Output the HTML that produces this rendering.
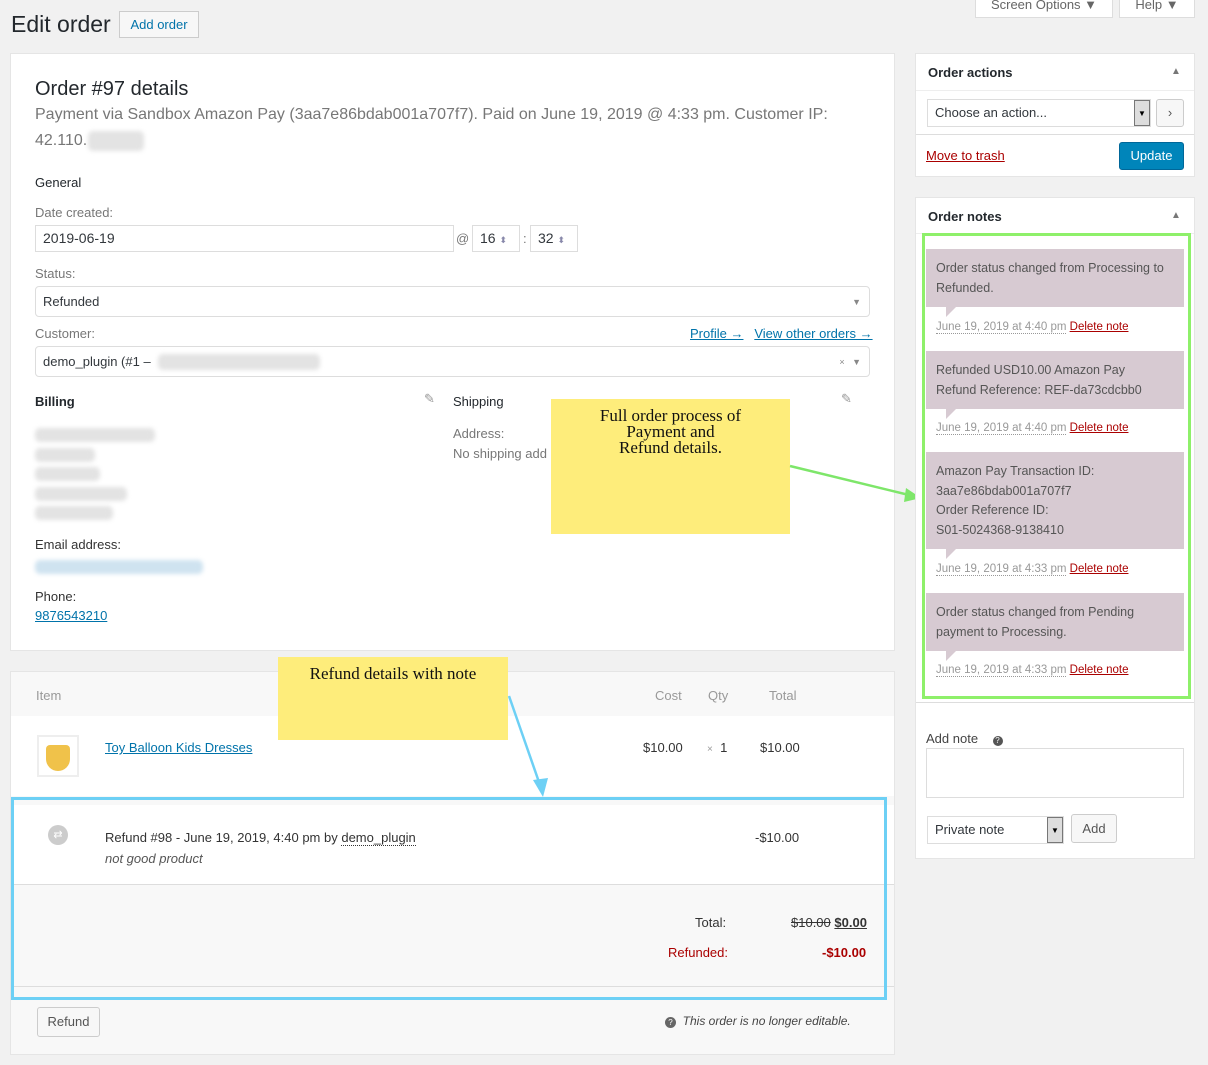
<!DOCTYPE html>
<html><head><meta charset="utf-8"><style>
*{box-sizing:border-box;margin:0;padding:0}
body{width:1208px;height:1065px;background:#f1f1f1;font-family:"Liberation Sans",sans-serif;font-size:13px;color:#444;position:relative;overflow:hidden}
.a{position:absolute}
.box{position:absolute;background:#fff;border:1px solid #e5e5e5}
.inp{position:absolute;background:#fff;border:1px solid #ddd;font-size:13px;color:#32373c;padding-left:7px;line-height:24px}
.lnk{color:#0073aa;text-decoration:underline}
.red{color:#a00;text-decoration:underline}
.note{position:absolute;left:926px;width:258px;background:#d7cad2;color:#555;font-size:12.5px;line-height:19.5px;padding:10px 20px 10px 10px}
.note:after{content:"";position:absolute;left:20px;bottom:-10px;border-top:10px solid #d7cad2;border-right:10px solid transparent}
.meta{position:absolute;left:936px;font-size:11.5px;color:#999}
.meta span{border-bottom:1px dotted #999}
.meta b{font-weight:normal;color:#a00;text-decoration:underline}
.blur{position:absolute;background:#e3e3e3;border-radius:5px;filter:blur(2px)}
.yel{position:absolute;background:#feed7b;font-family:"Liberation Serif",serif;font-size:17px;color:#111;text-align:center;line-height:16px}
</style></head><body>
<div class="a" style="left:11px;top:11px;font-size:23px;color:#23282d">Edit order</div>
<div class="a" style="left:119px;top:11px;width:80px;height:27px;border:1px solid #ccc;background:#f7f7f7;color:#0073aa;font-size:13px;text-align:center;line-height:25px">Add order</div>
<div class="a" style="left:975px;top:-6px;width:138px;height:24px;background:#fff;border:1px solid #ddd;color:#666;text-align:center;line-height:20px">Screen Options ▼</div>
<div class="a" style="left:1119px;top:-6px;width:76px;height:24px;background:#fff;border:1px solid #ddd;color:#666;text-align:center;line-height:20px">Help ▼</div>

<div class="box" style="left:10px;top:53px;width:885px;height:598px"></div>
<div class="a" style="left:35px;top:78px;font-size:20px;color:#23282d">Order #97 details</div>
<div class="a" style="left:35px;top:102px;font-size:16px;color:#777;line-height:26px;width:810px">Payment via Sandbox Amazon Pay (3aa7e86bdab001a707f7). Paid on June 19, 2019 @ 4:33 pm. Customer IP: 42.110.</div>
<div class="blur" style="left:88px;top:131px;width:56px;height:20px"></div>
<div class="a" style="left:35px;top:175px;color:#23282d">General</div>
<div class="a" style="left:35px;top:205px;color:#777">Date created:</div>
<div class="inp" style="left:35px;top:225px;width:419px;height:27px;font-size:14px">2019-06-19</div>
<div class="a" style="left:456px;top:231px;color:#777">@</div>
<div class="inp" style="left:472px;top:225px;width:48px;height:27px;font-size:14px">16 <span style="font-size:9px;color:#88a">⬍</span></div>
<div class="a" style="left:523px;top:231px;color:#777">:</div>
<div class="inp" style="left:530px;top:225px;width:48px;height:27px;font-size:14px">32 <span style="font-size:9px;color:#88a">⬍</span></div>
<div class="a" style="left:35px;top:266px;color:#777">Status:</div>
<div class="inp" style="left:35px;top:286px;width:835px;height:31px;border-radius:4px;line-height:30px">Refunded<span style="position:absolute;right:8px;font-size:9px;color:#888">▼</span></div>
<div class="a" style="left:35px;top:326px;color:#777">Customer:</div>
<div class="a" style="left:690px;top:326px"><span class="lnk">Profile →</span>&nbsp;&nbsp;&nbsp;<span class="lnk">View other orders →</span></div>
<div class="inp" style="left:35px;top:346px;width:835px;height:31px;border-radius:4px;line-height:30px">demo_plugin (#1 – <span style="position:absolute;right:8px;font-size:9px;color:#888">×&nbsp;&nbsp;&nbsp;▼</span></div>
<div class="blur" style="left:158px;top:354px;width:162px;height:16px"></div>
<div class="a" style="left:35px;top:394px;color:#23282d;font-weight:bold">Billing</div>
<div class="a" style="left:424px;top:391px;color:#999">✎</div>
<div class="a" style="left:453px;top:394px;color:#23282d">Shipping</div>
<div class="a" style="left:841px;top:391px;color:#999">✎</div>
<div class="a" style="left:453px;top:426px;color:#777">Address:</div>
<div class="a" style="left:453px;top:446px;color:#777">No shipping add</div>
<div class="blur" style="left:35px;top:428px;width:120px;height:14px"></div>
<div class="blur" style="left:35px;top:448px;width:60px;height:14px"></div>
<div class="blur" style="left:35px;top:467px;width:65px;height:14px"></div>
<div class="blur" style="left:35px;top:487px;width:92px;height:14px"></div>
<div class="blur" style="left:35px;top:506px;width:78px;height:14px"></div>
<div class="a" style="left:35px;top:537px;color:#333">Email address:</div>
<div class="blur" style="left:35px;top:560px;width:168px;height:14px;background:#cfe3f0"></div>
<div class="a" style="left:35px;top:589px;color:#333">Phone:</div>
<div class="a lnk" style="left:35px;top:608px">9876543210</div>

<div class="yel" style="left:551px;top:399px;width:239px;height:135px;padding-top:9px">Full order process of<br>Payment and<br>Refund details.</div>
<svg class="a" style="left:785px;top:460px" width="140" height="50"><line x1="5" y1="6" x2="124" y2="35" stroke="#7ee66a" stroke-width="2.5"/><polygon points="136,38 121,28 119,42" fill="#7ee66a"/></svg>

<div class="box" style="left:10px;top:671px;width:885px;height:384px;background:#f8f8f8"></div>
<div class="a" style="left:11px;top:716px;width:883px;height:80px;background:#fff"></div>
<div class="a" style="left:36px;top:688px;color:#999">Item</div>
<div class="a" style="left:655px;top:688px;color:#999">Cost</div>
<div class="a" style="left:708px;top:688px;color:#999">Qty</div>
<div class="a" style="left:769px;top:688px;color:#999">Total</div>
<div class="a" style="left:37px;top:735px;width:42px;height:42px;border:2px solid #eee;background:#fff"><div style="margin:8px auto 0;width:24px;height:26px;background:#f0c24a;border-radius:4px 4px 12px 12px"></div></div>
<div class="a lnk" style="left:105px;top:740px">Toy Balloon Kids Dresses</div>
<div class="a" style="left:643px;top:740px;color:#333">$10.00</div>
<div class="a" style="left:707px;top:740px;color:#333"><span style="color:#999;font-size:10px">×</span>&nbsp; 1</div>
<div class="a" style="left:760px;top:740px;color:#333">$10.00</div>
<div class="a" style="left:11px;top:805px;width:883px;height:80px;background:#fff;border-bottom:1px solid #ddd"></div>
<div class="a" style="left:48px;top:825px;width:20px;height:20px;border-radius:50%;background:#ccc;color:#fff;font-size:11px;text-align:center;line-height:20px">⇄</div>
<div class="a" style="left:105px;top:830px;color:#333">Refund #98 - June 19, 2019, 4:40 pm by <span style="border-bottom:1px dotted #333">demo_plugin</span></div>
<div class="a" style="left:105px;top:851px;color:#555;font-style:italic">not good product</div>
<div class="a" style="left:755px;top:830px;color:#333">-$10.00</div>
<div class="a" style="left:695px;top:915px;color:#333">Total:</div>
<div class="a" style="left:791px;top:915px;color:#333"><s>$10.00</s> <b style="text-decoration:underline">$0.00</b></div>
<div class="a" style="left:668px;top:945px;color:#a00">Refunded:</div>
<div class="a" style="left:822px;top:945px;color:#a00;font-weight:bold">-$10.00</div>
<div class="a" style="left:11px;top:986px;width:883px;border-top:1px solid #ddd"></div>
<div class="a" style="left:11px;top:797px;width:876px;height:203px;border:3px solid #6dd0f5"></div>
<div class="a" style="left:37px;top:1007px;width:63px;height:30px;border:1px solid #ccc;background:#f7f7f7;border-radius:3px;text-align:center;line-height:28px;color:#555">Refund</div>
<div class="a" style="left:665px;top:1014px;color:#444;font-style:italic;font-size:12px"><span style="display:inline-block;width:11px;height:11px;border-radius:50%;background:#666;color:#fff;font-size:8px;text-align:center;line-height:11px;font-style:normal">?</span>&nbsp; This order is no longer editable.</div>

<div class="yel" style="left:278px;top:657px;width:230px;height:83px;padding-top:9px">Refund details with note</div>
<svg class="a" style="left:500px;top:690px" width="60" height="112"><line x1="9" y1="6" x2="40" y2="95" stroke="#6dd0f5" stroke-width="2.5"/><polygon points="43,107 33,90 48,88" fill="#6dd0f5"/></svg>

<div class="box" style="left:915px;top:53px;width:280px;height:124px"></div>
<div class="a" style="left:928px;top:65px;color:#23282d;font-weight:bold">Order actions</div>
<div class="a" style="left:1171px;top:66px;color:#777;font-size:10px">▲</div>
<div class="a" style="left:916px;top:90px;width:278px;border-top:1px solid #eee"></div>
<div class="inp" style="left:927px;top:99px;width:224px;height:28px;line-height:26px">Choose an action...<span style="position:absolute;right:0;top:0;width:16px;height:26px;border:1px solid #777;background:#ddd;font-size:8px;text-align:center;color:#000">▼</span></div>
<div class="a" style="left:1156px;top:99px;width:28px;height:28px;border:1px solid #ccc;border-radius:3px;background:#f7f7f7;text-align:center;line-height:26px;color:#555">›</div>
<div class="a" style="left:916px;top:134px;width:278px;border-top:1px solid #ddd"></div>
<div class="a red" style="left:926px;top:148px">Move to trash</div>
<div class="a" style="left:1119px;top:142px;width:65px;height:28px;background:#0085ba;border:1px solid #006799;border-radius:3px;color:#fff;text-align:center;line-height:26px;font-size:13px">Update</div>

<div class="box" style="left:915px;top:197px;width:280px;height:662px"></div>
<div class="a" style="left:928px;top:209px;color:#23282d;font-weight:bold">Order notes</div>
<div class="a" style="left:1171px;top:210px;color:#777;font-size:10px">▲</div>
<div class="a" style="left:916px;top:233px;width:278px;border-top:1px solid #eee"></div>
<div class="note" style="top:249px;height:58px">Order status changed from Processing to Refunded.</div>
<div class="meta" style="top:321px"><span>June 19, 2019 at 4:40 pm</span> <b>Delete note</b></div>
<div class="note" style="top:351px;height:58px">Refunded USD10.00 Amazon Pay Refund Reference: REF-da73cdcbb0</div>
<div class="meta" style="top:422px"><span>June 19, 2019 at 4:40 pm</span> <b>Delete note</b></div>
<div class="note" style="top:452px;height:97px">Amazon Pay Transaction ID: 3aa7e86bdab001a707f7<br>Order Reference ID:<br>S01-5024368-9138410</div>
<div class="meta" style="top:563px"><span>June 19, 2019 at 4:33 pm</span> <b>Delete note</b></div>
<div class="note" style="top:593px;height:58px">Order status changed from Pending payment to Processing.</div>
<div class="meta" style="top:664px"><span>June 19, 2019 at 4:33 pm</span> <b>Delete note</b></div>
<div class="a" style="left:922px;top:233px;width:269px;height:466px;border:3px solid #8ef06a"></div>
<div class="a" style="left:916px;top:702px;width:278px;border-top:1px solid #ddd"></div>
<div class="a" style="left:926px;top:731px;color:#444">Add note&nbsp;&nbsp;&nbsp; <span style="display:inline-block;width:10px;height:10px;border-radius:50%;background:#555;color:#fff;font-size:8px;text-align:center;line-height:10px">?</span></div>
<div class="a" style="left:926px;top:748px;width:258px;height:50px;border:1px solid #ddd;background:#fff"></div>
<div class="inp" style="left:927px;top:816px;width:137px;height:28px;line-height:26px">Private note<span style="position:absolute;right:0;top:0;width:16px;height:26px;border:1px solid #777;background:#ddd;font-size:8px;text-align:center;color:#000">▼</span></div>
<div class="a" style="left:1071px;top:814px;width:46px;height:29px;border:1px solid #ccc;border-radius:3px;background:#f7f7f7;text-align:center;line-height:27px;color:#555">Add</div>
</body></html>
